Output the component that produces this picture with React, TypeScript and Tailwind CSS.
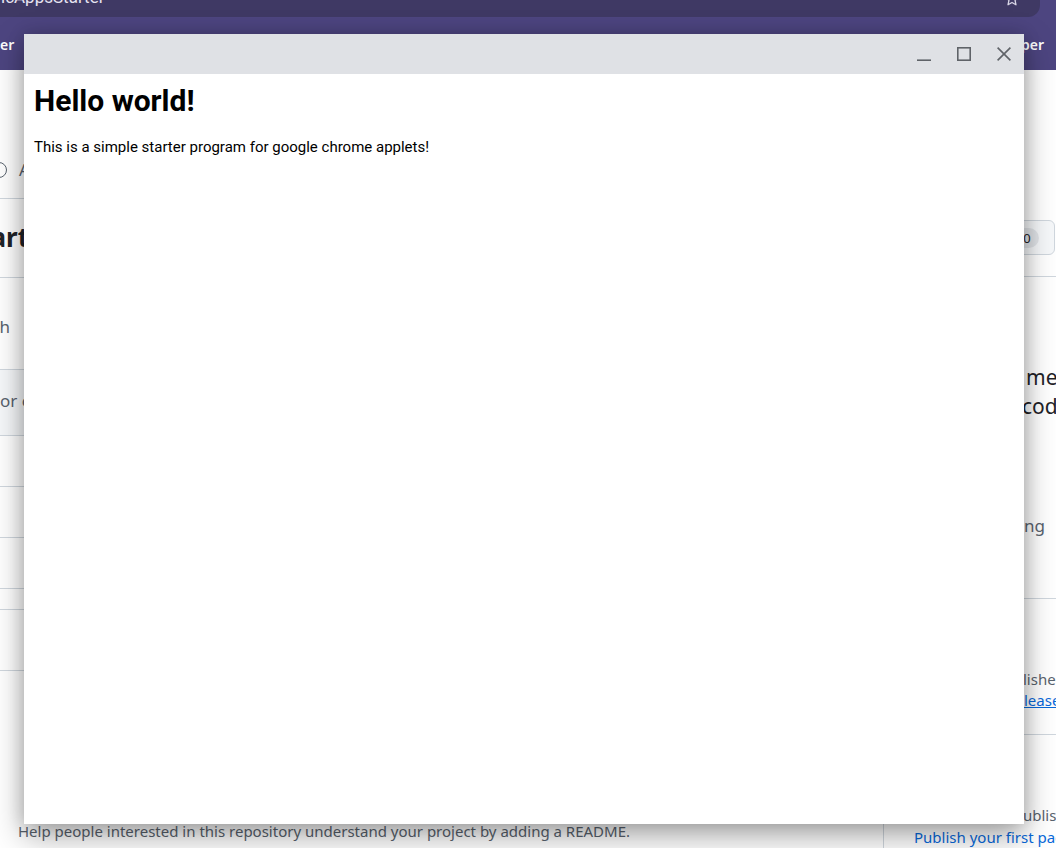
import React from "react";

const IconColor = "#5f6368";

function MinIcon() {
  return (
    <svg width="14" height="14" viewBox="0 0 14 14" fill="none">
      <path d="M0 13.2H14" stroke={IconColor} strokeWidth="1.6" />
    </svg>
  );
}
function MaxIcon() {
  return (
    <svg width="14" height="14" viewBox="0 0 14 14" fill="none">
      <rect x="0.8" y="0.8" width="12.4" height="12.4" stroke={IconColor} strokeWidth="1.6" />
    </svg>
  );
}
function CloseIcon() {
  return (
    <svg width="14" height="14" viewBox="0 0 14 14" fill="none">
      <path d="M0.6 0.6L13.4 13.4M13.4 0.6L0.6 13.4" stroke={IconColor} strokeWidth="1.6" />
    </svg>
  );
}
function StarIcon() {
  return (
    <svg width="16" height="16" viewBox="0 0 24 24" fill="none">
      <path
        d="M12 2.5l2.9 6.1 6.6.8-4.9 4.6 1.3 6.6L12 17.3l-5.9 3.3 1.3-6.6-4.9-4.6 6.6-.8z"
        stroke="#d9d6e6"
        strokeWidth="2"
        strokeLinejoin="round"
      />
    </svg>
  );
}

export default function App() {
  return (
    <div className="relative w-[1056px] h-[848px] overflow-hidden bg-white font-['Noto_Sans',sans-serif]">
      {/* Browser chrome behind */}
      <div className="h-[70px] bg-[#4d4580] flex flex-col">
        <div className="h-[17px] w-[1040px] bg-[#3f3964] rounded-br-[12px] flex items-start justify-between overflow-hidden">
          <span className="-mt-[13px] ml-[1px] text-[17px] leading-[20px] text-[#e6e3f0] font-['Roboto',sans-serif]">
            icAppsStarter
          </span>
          <span className="-mt-[9px] mr-[20px]">
            <StarIcon />
          </span>
        </div>
        <div className="flex-1 flex items-center justify-between pt-[2px] text-white font-semibold text-[14px]">
          <span>er</span>
          <span className="mr-[12px]">per</span>
        </div>
      </div>

      {/* Page behind */}
      <div className="flex text-[#1f2328]">
        <div className="w-[884px] shrink-0 border-r border-[#d0d7de] flex flex-col">
          <div className="h-[129px] border-b border-[#d0d7de] pt-[88px] flex items-start gap-[12px] -ml-[9px]">
            <span className="mt-[4px] w-[16px] h-[16px] rounded-full border-[1.5px] border-[#59636e]" />
            <span className="text-[17px] leading-[24px] text-[#59636e]">A</span>
          </div>
          <div className="h-[79px] border-b border-[#d0d7de] pt-[22px]">
            <div className="w-[29px] flex justify-end whitespace-nowrap">
              <span className="text-[26px] leading-[32px] font-bold">Start</span>
            </div>
          </div>
          <div className="h-[92px] border-b border-[#d0d7de] pt-[37px]">
            <div className="w-[10px] flex justify-end whitespace-nowrap">
              <span className="text-[17px] leading-[24px] text-[#59636e]">Branch</span>
            </div>
          </div>
          <div className="h-[66px] border-b border-[#d0d7de] bg-[#f6f8fa] pt-[19px]">
            <span className="text-[17px] leading-[24px] text-[#59636e] whitespace-nowrap">or commit</span>
          </div>
          <div className="h-[51px] border-b border-[#d0d7de]" />
          <div className="h-[51px] border-b border-[#d0d7de]" />
          <div className="h-[51px] border-b border-[#d0d7de]" />
          <div className="h-[21px] border-b border-[#d0d7de]" />
          <div className="h-[61px] border-b border-[#d0d7de]" />
          <div className="pt-[150px] pl-[18px] text-[15px] leading-[20px] text-[#59636e] whitespace-nowrap">
            Help people interested in this repository understand your project by adding a README.
          </div>
        </div>

        <div className="flex-1 min-w-0 overflow-hidden flex flex-col whitespace-nowrap">
          <div className="h-[207px] border-b border-[#d0d7de] pt-[150px]">
            <div className="ml-auto mr-[1px] w-[140px] h-[35px] border border-[#d0d7de] bg-[#f6f8fa] rounded-md flex items-center justify-end pr-[15px]">
              <span className="h-[20px] w-[24px] rounded-full bg-[#e2e5e9] text-[13px] leading-[20px] text-center">0</span>
            </div>
          </div>
          <div className="h-[322px] border-b border-[#d0d7de] pt-[86px]">
            <div className="pl-[142px] text-[21px] leading-[29px]">me</div>
            <div className="pl-[138px] text-[21px] leading-[29px]">code</div>
            <div className="pl-[140px] mt-[93px] text-[17px] leading-[24px] text-[#59636e]">ng</div>
          </div>
          <div className="h-[136px] border-b border-[#d0d7de] pt-[70px] text-[15px] leading-[21px]">
            <div className="pl-[139px] text-[#59636e]">lished</div>
            <div className="pl-[140px] text-[#0969da] underline">lease</div>
          </div>
          <div className="pt-[69px] text-[15px] leading-[22px]">
            <div className="pl-[139px] text-[#59636e]">ublish</div>
            <div className="pl-[30px] text-[#0969da]">Publish your first package</div>
          </div>
        </div>
      </div>

      {/* App window */}
      <div className="absolute left-[24px] top-[34px] w-[1000px] h-[790px] bg-white flex flex-col shadow-[0_12px_30px_rgba(0,0,0,0.34),0_0_16px_rgba(0,0,0,0.16)] font-['Roboto',sans-serif]">
        <div className="h-[40px] bg-[#dfe1e5] flex justify-end items-center">
          <div className="w-[40px] h-[40px] flex items-center justify-center">
            <MinIcon />
          </div>
          <div className="w-[40px] h-[40px] flex items-center justify-center">
            <MaxIcon />
          </div>
          <div className="w-[40px] h-[40px] flex items-center justify-center">
            <CloseIcon />
          </div>
        </div>
        <div className="flex-1 pt-[9px] pl-[10px] text-black">
          <h1 className="text-[30px] leading-[36px] font-bold">Hello world!</h1>
          <p className="mt-[18px] text-[15px] leading-[20px]">
            This is a simple starter program for google chrome applets!
          </p>
        </div>
      </div>
    </div>
  );
}
